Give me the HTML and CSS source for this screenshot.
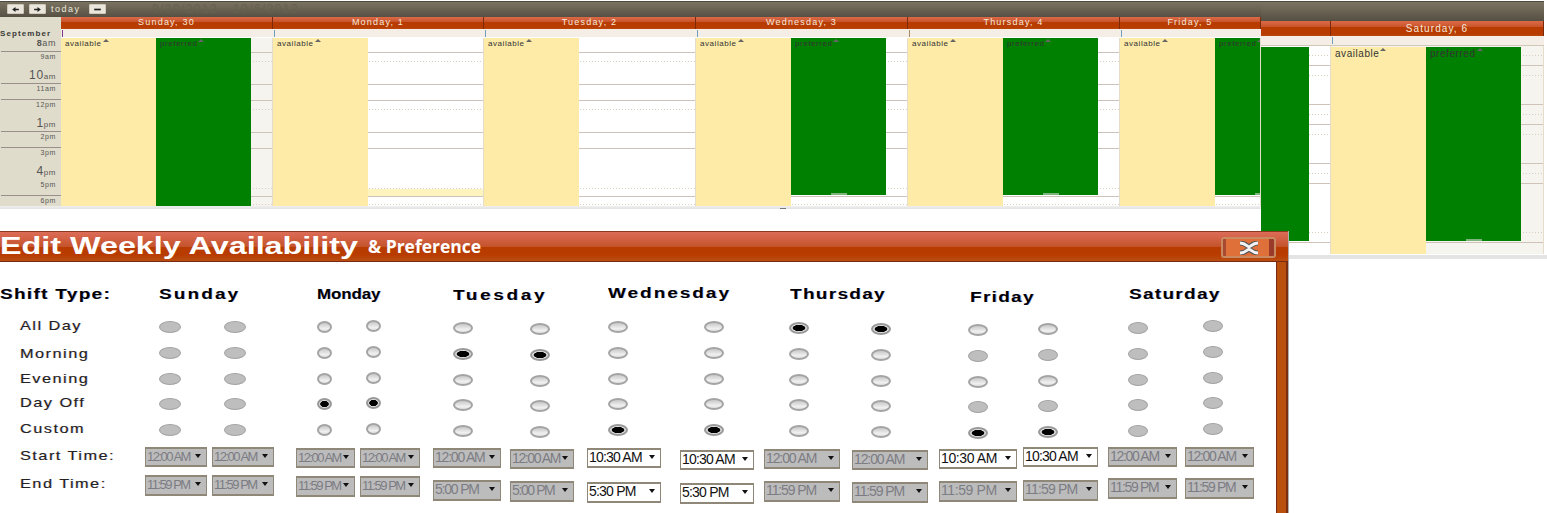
FILE: index.html
```html
<!DOCTYPE html>
<html lang="en">
<head>
<meta charset="utf-8">
<title>Edit Weekly Availability</title>
<link rel="stylesheet" href="styles.css">
</head>
<body>

<section class="win back">
  <div class="bar"></div>
  <div class="back-grid">
    <div class="head"></div><div class="head">Saturday, 6</div>
    <div class="allday"></div><div class="allday tick"></div>
    <div class="col">
      <div class="ev pref cut"></div>
    </div>
    <div class="col shade">
      <div class="ev avail"><span class="up">available</span></div>
      <div class="ev pref second"><span class="up">preferred</span><i class="handle"></i></div>
    </div>
  </div>
  <div class="strip"></div>
</section>

<section class="win front">
  <div class="bar">
    <button class="tbtn"><svg width="7" height="5" viewBox="0 0 8 6"><path d="M0 3 4 0v2h4v2H4v2z"/></svg></button>
    <button class="tbtn"><svg width="7" height="5" viewBox="0 0 8 6"><path d="M8 3 4 0v2H0v2h4v2z"/></svg></button>
    <span class="today">today</span>
    <button class="tbtn"><svg width="7" height="5" viewBox="0 0 8 6"><path d="M0 2h8v2H0z"/></svg></button>
    <span class="range">9/30/2012</span><span class="range">10/6/2012</span>
  </div>
  <div class="cal">
    <div class="corner">September</div>
    <div class="head">Sunday, 30</div><div class="head">Monday, 1</div><div class="head">Tuesday, 2</div><div class="head">Wednesday, 3</div><div class="head">Thursday, 4</div><div class="head">Friday, 5</div>
    <div class="allday tick violet"></div><div class="allday tick"></div><div class="allday tick"></div><div class="allday tick"></div><div class="allday tick brown"></div><div class="allday tick"></div>
    <div class="axis">
      <div class="hr ln"><b>8</b>am</div>
      <div class="hr">9am</div>
      <div class="hr ln big"><b>10</b>am</div>
      <div class="hr ln">11am</div>
      <div class="hr">12pm</div>
      <div class="hr ln big"><b>1</b>pm</div>
      <div class="hr ln">2pm</div>
      <div class="hr">3pm</div>
      <div class="hr big"><b>4</b>pm</div>
      <div class="hr ln">5pm</div>
      <div class="hr">6pm</div>
    </div>
    <div class="col shade">
      <div class="ev avail"><span class="up">available</span></div>
      <div class="ev pref second full"><span class="up">preferred</span></div>
    </div>
    <div class="col">
      <div class="ev avail"><span class="up">available</span></div>
      <div class="band"></div>
    </div>
    <div class="col">
      <div class="ev avail"><span class="up">available</span></div>
    </div>
    <div class="col">
      <div class="ev avail"><span class="up">available</span></div>
      <div class="ev pref second"><span class="up">preferred</span><i class="handle"></i></div>
    </div>
    <div class="col">
      <div class="ev avail"><span class="up">available</span></div>
      <div class="ev pref second"><span class="up">preferred</span><i class="handle"></i></div>
    </div>
    <div class="col">
      <div class="ev avail"><span class="up">available</span></div>
      <div class="ev pref second"><span class="up">preferred</span><i class="handle"></i></div>
    </div>
  </div>
  <div class="scroll"><i class="grip"></i></div>
</section>

<section class="dlg">
  <header class="dlg-title">
    <h1 class="t-main">Edit Weekly Availability</h1>
    <span class="t-sub">&amp; Preference</span>
    <button class="close" aria-label="Close">
      <svg width="24" height="14" viewBox="0 0 24 14"><path class="x-o" d="M3 2c5 0 7 3 9 4 2-1 4-4 9-4M3 12c5 0 7-3 9-4 2 1 4 4 9 4"/><path class="x-i" d="M3 2c5 0 7 3 9 4 2-1 4-4 9-4M3 12c5 0 7-3 9-4 2 1 4 4 9 4"/></svg>
    </button>
  </header>
  <div class="dlg-wrap">
    <div class="dlg-main">
      <div class="heads">
        <h2 class="shift">Shift Type:</h2>
        <h2>Sunday</h2><h2>Monday</h2><h2>Tuesday</h2><h2>Wednesday</h2><h2>Thursday</h2><h2>Friday</h2><h2>Saturday</h2>
      </div>
      <div class="radios">
        <div class="labels">
          <span>All Day</span><span>Morning</span><span>Evening</span><span>Day Off</span><span>Custom</span>
        </div>
        <div class="rcol wide"><input type="radio" disabled><input type="radio" disabled><input type="radio" disabled><input type="radio" disabled><input type="radio" disabled></div>
        <div class="rcol wide"><input type="radio" disabled><input type="radio" disabled><input type="radio" disabled><input type="radio" disabled><input type="radio" disabled></div>
        <div class="rcol narrow"><input type="radio"><input type="radio"><input type="radio"><input type="radio" checked><input type="radio"></div>
        <div class="rcol narrow"><input type="radio"><input type="radio"><input type="radio"><input type="radio" checked><input type="radio"></div>
        <div class="rcol"><input type="radio"><input type="radio" checked><input type="radio"><input type="radio"><input type="radio"></div>
        <div class="rcol"><input type="radio"><input type="radio" checked><input type="radio"><input type="radio"><input type="radio"></div>
        <div class="rcol"><input type="radio"><input type="radio"><input type="radio"><input type="radio"><input type="radio" checked></div>
        <div class="rcol"><input type="radio"><input type="radio"><input type="radio"><input type="radio"><input type="radio" checked></div>
        <div class="rcol"><input type="radio" checked><input type="radio"><input type="radio"><input type="radio"><input type="radio"></div>
        <div class="rcol"><input type="radio" checked><input type="radio"><input type="radio"><input type="radio"><input type="radio"></div>
        <div class="rcol"><input type="radio"><input type="radio" disabled><input type="radio"><input type="radio" disabled><input type="radio" checked></div>
        <div class="rcol"><input type="radio"><input type="radio" disabled><input type="radio"><input type="radio" disabled><input type="radio" checked></div>
        <div class="rcol"><input type="radio" disabled><input type="radio" disabled><input type="radio" disabled><input type="radio" disabled><input type="radio" disabled></div>
        <div class="rcol"><input type="radio" disabled><input type="radio" disabled><input type="radio" disabled><input type="radio" disabled><input type="radio" disabled></div>
      </div>
      <div class="sels start">
        <span class="tlabel">Start Time:</span>
        <div class="sel off">12:00 AM</div><div class="sel off">12:00 AM</div>
        <div class="sel off">12:00 AM</div><div class="sel off">12:00 AM</div>
        <div class="sel off">12:00 AM</div><div class="sel off">12:00 AM</div>
        <div class="sel">10:30 AM</div><div class="sel">10:30 AM</div>
        <div class="sel off">12:00 AM</div><div class="sel off">12:00 AM</div>
        <div class="sel">10:30 AM</div><div class="sel">10:30 AM</div>
        <div class="sel off">12:00 AM</div><div class="sel off">12:00 AM</div>
      </div>
      <div class="sels end">
        <span class="tlabel">End Time:</span>
        <div class="sel off">11:59 PM</div><div class="sel off">11:59 PM</div>
        <div class="sel off">11:59 PM</div><div class="sel off">11:59 PM</div>
        <div class="sel off">5:00 PM</div><div class="sel off">5:00 PM</div>
        <div class="sel">5:30 PM</div><div class="sel">5:30 PM</div>
        <div class="sel off">11:59 PM</div><div class="sel off">11:59 PM</div>
        <div class="sel off">11:59 PM</div><div class="sel off">11:59 PM</div>
        <div class="sel off">11:59 PM</div><div class="sel off">11:59 PM</div>
      </div>
    </div>
  </div>
</section>

</body>
</html>
```
FILE: styles.css
```css
html, body { margin: 0; height: 513px; overflow: hidden; background: #fff; }
body { position: relative; font-family: "Liberation Sans", Arial, sans-serif; color: #222; }
h1, h2 { margin: 0; }

/* ---------- calendar windows ---------- */
.win { position: absolute; top: 1px; background: #fff; }
.front { left: 0; width: 1261px; height: 230px; overflow: hidden; }
.back { left: 1261px; width: 286px; height: 260px; }

.bar {
  display: flex; align-items: center;
  height: 16px; padding-left: 7px;
  background: linear-gradient(#4f4a3f 0 1px, #7b7361 1px, #565044);
}
.back .bar { height: 20px; width: 283px; padding: 0; }

.tbtn {
  display: flex; align-items: center; justify-content: center;
  width: 17px; height: 10px; padding: 0; margin-right: 5px;
  background: #ebe6db; border: 1px solid #cfcabb; border-radius: 1px;
}
.tbtn svg { display: block; fill: #222; }
.today { width: 38px; color: #ece8dc; font-size: 9px; line-height: 10px; letter-spacing: 1.5px; }
.range { color: #66604f; font-size: 12px; letter-spacing: 1.4px; margin-left: 46px; }
.range + .range { margin-left: 15px; }
.tbtn:nth-of-type(3) { margin-right: 0; }

.cal {
  display: grid;
  grid-template-columns: 61px 212px 211px 212px 212px 212px 141px;
  grid-template-rows: 12px 9px 168px;
}
.back-grid {
  display: grid;
  width: 283px;
  grid-template-columns: 70px 213px;
  grid-template-rows: 15px 10px 208px;
}
.corner {
  grid-row: 1 / 3;
  background: #e0dccb; color: #3a3a3a;
  font: bold 8px/8px "Liberation Sans", sans-serif; letter-spacing: 1.1px;
  padding-top: 13px; white-space: nowrap; overflow: hidden;
}
.head {
  background: linear-gradient(#dc6a48, #c9552c 38%, #b83c00 42%, #b83c00 85%, #b9480e);
  border-right: 1px solid #7e2a08;
  color: #f6e8dc; text-align: center;
  font-size: 9px; line-height: 11px; letter-spacing: 1.2px;
}
.back .head { font-size: 10px; line-height: 15px; letter-spacing: 1.1px; }
.allday { background: #f5eee7; position: relative; border-bottom: 1px solid #fff; }
.back .allday { border-bottom: 1px solid #cfc8b8; }
.tick::before {
  content: ""; position: absolute; left: 1px; top: 1px;
  width: 1px; height: 7px; background: #6f9fbd;
}
.violet::before { background: #7a3a86; }
.brown::before { background: #a58a6a; }

.axis { background: #e0dccb; display: flex; flex-direction: column; padding-left: 1px; }
.hr {
  height: 16px; box-sizing: border-box;
  padding-right: 5px; text-align: right; overflow: hidden;
  font-size: 7px; line-height: 9px; color: #555; letter-spacing: .6px;
  white-space: nowrap;
}
.hr:first-child { height: 14px; font-size: 9px; line-height: 6px; }
.hr:last-child { height: 10px; }
.hr.ln { border-bottom: 1px solid #9a8f8c; }
.hr.big { padding-top: 2px; font-size: 8px; }
.hr b { font-weight: normal; font-size: 12px; line-height: 10px; }
.hr:first-child b { font-size: 9px; font-weight: bold; }

.col {
  --solid: linear-gradient(#cfc2b8, #cfc2b8);
  --dot: repeating-linear-gradient(90deg, #d9d0c0 0 1px, transparent 1px 3px);
  position: relative;
  border-right: 1px solid #e6dccb;
  overflow: hidden;
  background-repeat: no-repeat;
  background-size: 100% 1px;
  background-color: #fff;
}
.cal .col {
  background-image: var(--solid), var(--dot), var(--solid), var(--solid), var(--dot), var(--solid), var(--solid), var(--dot), var(--solid), var(--dot);
  background-position: 0 14px, 0 23px, 0 46px, 0 62px, 0 71px, 0 94px, 0 110px, 0 150px, 0 158px, 0 166px;
}
.back-grid .col {
  background-image: var(--dot), var(--solid), var(--dot), var(--solid), var(--solid), var(--dot), var(--solid), var(--solid), var(--dot), var(--dot), var(--solid), var(--dot);
  background-position: 0 9px, 0 19px, 0 29px, 0 58px, 0 78px, 0 68px, 0 117px, 0 137px, 0 88px, 0 127px, 0 196px, 0 186px;
}
.col.shade { background-color: #f5f4ef; }

.ev {
  position: absolute; top: 0; left: 0;
  width: 95px; height: 100%; box-sizing: border-box;
  padding: 2px 0 0 4px;
  font-size: 8px; line-height: 7px; letter-spacing: .55px; color: #333;
  overflow: hidden;
}
.avail { background: #feeba8; }
.pref { background: #008000; height: 157px; }
.second { left: 95px; }
.full { height: 100%; }
.cut { width: 48px; height: 194px; top: 1px; }
.back-grid .avail { top: 1px; height: 207px; font-size: 10px; line-height: 10px; }
.back-grid .second { top: 1px; height: 194px; font-size: 10px; line-height: 10px; }
.up::after {
  content: ""; display: inline-block; vertical-align: top;
  margin: -1px 0 0 1px;
  border: 3px solid transparent; border-top: 0; border-bottom-color: #666;
}
.handle {
  position: absolute; bottom: 0; left: 40px;
  width: 16px; height: 2px; background: #7fb47f;
}
.band { position: absolute; left: 95px; right: 0; top: 151px; height: 7px; background: #fdf4c0; }

.scroll { height: 3px; background: linear-gradient(#efefef, #e2e2e2); position: relative; }
.grip { position: absolute; left: 780px; top: 2px; width: 6px; height: 1px; background: #777; }
.strip { height: 4px; margin-top: 1px; background: #e4e4e4; }

/* ---------- dialog ---------- */
.dlg { position: absolute; left: 0; top: 231px; width: 1288px; box-shadow: 1px 0 0 #b0b0b0; }
.dlg-title {
  position: relative; display: flex; align-items: flex-start;
  height: 30px; border-bottom: 1px solid #7a2a10; overflow: hidden;
  background: linear-gradient(#8a3a20 0 1px, #dd6c58 1px, #c4532c 52%, #b83c00 55%, #b83c00 80%, #b94e12);
}
.t-main {
  flex: none; color: #fff; font-size: 23px; line-height: 31px; font-weight: bold;
  width: 262px; white-space: nowrap;
  transform: scaleX(1.405); transform-origin: left center;
}
.t-sub {
  margin-left: 106px; color: #fff; font-family: "Open Sans", sans-serif;
  font-size: 17.5px; line-height: 30px; font-weight: 700; white-space: nowrap;
}
.close {
  position: absolute; left: 1221px; top: 6px;
  display: flex; align-items: center; justify-content: center;
  width: 55px; height: 21px; padding: 0;
  background: linear-gradient(90deg, #a84a30 0 3px, #e0703a 3px 90%, #9a3a28 90%);
  border: 2px solid #c98a62; border-radius: 3px;
}
.close svg { display: block; fill: none; }
.x-o { stroke: #555; stroke-width: 5; }
.x-i { stroke: #f2f2f2; stroke-width: 3; }

.dlg-wrap { background: #b9500e; padding-right: 9px; border-right: 2px solid #7a3010; }
.dlg-main { border-right: 1px solid #7a2a10; background: #fff; width: 1276px; height: 260px; }

.heads { display: flex; align-items: flex-start; height: 58px; box-sizing: border-box; padding-top: 23px; color: #000; }
.heads h2 {
  flex: none; margin-top: 1px; font-size: 14px; line-height: 16px; font-weight: bold; white-space: nowrap;
  text-shadow: .6px 0 rgba(0, 0, 170, .35);
  transform: scaleX(1.35); transform-origin: left center;
}
.heads h2:nth-child(1) { width: 159px; letter-spacing: 1px; }
.heads h2:nth-child(2) { width: 158px; letter-spacing: 1.6px; }
.heads h2:nth-child(3) { width: 136px; transform: scaleX(1.2); }
.heads h2:nth-child(4) { width: 155px; margin-top: 2px; letter-spacing: 2px; }
.heads h2:nth-child(5) { width: 182px; margin-top: 0; letter-spacing: 1.5px; }
.heads h2:nth-child(6) { width: 180px; letter-spacing: 1px; }
.heads h2:nth-child(7) { width: 159px; margin-top: 4px; letter-spacing: 1px; }
.heads h2:nth-child(8) { letter-spacing: 1px; }

.radios { display: flex; height: 127px; }
.labels { flex: none; width: 159px; box-sizing: border-box; padding-left: 20px; }
.labels span, .tlabel {
  display: block; font-size: 13px; line-height: 12px; letter-spacing: 1.2px; color: #222;
  text-shadow: -.6px 0 rgba(220, 150, 40, .3), .6px 0 rgba(40, 60, 200, .3);
  transform: scaleX(1.25); transform-origin: left center;
}
.labels span { transform-origin: 0 50%; white-space: nowrap; }
.labels span:nth-child(1) { height: 28px; }
.labels span:nth-child(2) { height: 25px; }
.labels span:nth-child(3) { height: 24px; }
.labels span:nth-child(4) { height: 26px; }

.rcol { flex: none; display: flex; flex-direction: column; width: 20px; }
.rcol.wide { width: 22px; }
.rcol.narrow { width: 15px; }
.rcol input {
  appearance: none; -webkit-appearance: none;
  flex: none;
  display: block; width: 100%; height: 12px; margin: 0 0 14px; padding: 0;
  box-sizing: border-box; border-radius: 50%;
  border: 2px solid #a4a4a4;
  background: linear-gradient(#c8c8c8, #f0f0f0 70%, #dedede);
}
.rcol input:nth-child(3) { margin-bottom: 13px; }
.rcol input:last-child { margin-bottom: 0; }
.rcol input:disabled { background: #bebebe; border: 1px solid #a2a2a2; }
.rcol input:checked {
  background: radial-gradient(ellipse 42% 42% at 50% 50%, #000 0 85%, #dcdcdc 100%);
  border: 2px solid #999;
}
.rcol:nth-child(2) { margin: 1px 0 0 0; }
.rcol:nth-child(3) { margin: 1px 0 0 43px; }
.rcol:nth-child(4) { margin: 1px 0 0 71px; }
.rcol:nth-child(5) { margin: 0 0 0 34px; }
.rcol:nth-child(6) { margin: 2px 0 0 72px; }
.rcol:nth-child(7) { margin: 3px 0 0 57px; }
.rcol:nth-child(8) { margin: 1px 0 0 58px; }
.rcol:nth-child(9) { margin: 1px 0 0 76px; }
.rcol:nth-child(10) { margin: 2px 0 0 65px; }
.rcol:nth-child(11) { margin: 3px 0 0 62px; }
.rcol:nth-child(12) { margin: 4px 0 0 77px; }
.rcol:nth-child(13) { margin: 3px 0 0 50px; }
.rcol:nth-child(14) { margin: 2px 0 0 70px; }
.rcol:nth-child(15) { margin: 0 0 0 55px; }

.sels { display: flex; align-items: flex-start; }
.start { height: 28px; }
.end { height: 38px; }
.tlabel { width: 145px; box-sizing: border-box; padding-left: 16px; flex: none; white-space: nowrap; }
.start .tlabel { margin-top: 3px; }
.end .tlabel { margin-top: 3px; }

.sel {
  position: relative; flex: none;
  box-sizing: border-box; padding-left: 1px;
  background: #fff; color: #111;
  border: 1px solid #8f8878; border-width: 2px 1px;
  font-size: 14px; line-height: 15px; white-space: nowrap;
  overflow: hidden; height: 20px;
  letter-spacing: -.8px;
}
.sel::after {
  content: ""; position: absolute; right: 5px; top: 5px;
  border: 3.5px solid transparent; border-top: 4px solid #111; border-bottom: 0;
}
.sel.off { background: #bcbcbc; color: #7c7c84; }

.sel:nth-child(2)  { width: 62px; font-size: 13px; letter-spacing: -1.5px; }
.sel:nth-child(3)  { width: 62px; margin-left: 5px; font-size: 13px; letter-spacing: -1.5px; }
.sel:nth-child(4)  { width: 59px; margin-left: 22px; font-size: 13px; letter-spacing: -1.5px; }
.sel:nth-child(5)  { width: 60px; margin-left: 5px; font-size: 13px; letter-spacing: -1.5px; }
.sel:nth-child(6)  { width: 68px; margin-left: 13px; letter-spacing: -1.2px; }
.sel:nth-child(7)  { width: 64px; margin-left: 9px; letter-spacing: -1.4px; }
.sel:nth-child(8)  { width: 74px; margin-left: 13px; }
.sel:nth-child(9)  { width: 74px; margin-left: 19px; }
.sel:nth-child(10) { width: 76px; margin-left: 10px; letter-spacing: -1.1px; }
.sel:nth-child(11) { width: 76px; margin-left: 12px; letter-spacing: -1.1px; }
.sel:nth-child(12) { width: 78px; margin-left: 11px; letter-spacing: -.4px; }
.sel:nth-child(13) { width: 75px; margin-left: 6px; letter-spacing: -.8px; }
.sel:nth-child(14) { width: 69px; margin-left: 10px; letter-spacing: -1.3px; }
.sel:nth-child(15) { width: 69px; margin-left: 8px; letter-spacing: -1.3px; }

.start .sel:nth-child(4), .start .sel:nth-child(5), .start .sel:nth-child(6), .start .sel:nth-child(8) { margin-top: 1px; }
.start .sel:nth-child(7), .start .sel:nth-child(10), .start .sel:nth-child(12) { margin-top: 2px; }
.start .sel:nth-child(9), .start .sel:nth-child(11) { margin-top: 3px; }

.end .sel { height: 21px; }
.end .sel:nth-child(4), .end .sel:nth-child(5) { margin-top: 1px; }
.end .sel:nth-child(6), .end .sel:nth-child(13) { margin-top: 5px; }
.end .sel:nth-child(7), .end .sel:nth-child(10), .end .sel:nth-child(12) { margin-top: 6px; }
.end .sel:nth-child(8), .end .sel:nth-child(11) { margin-top: 7px; }
.end .sel:nth-child(9) { margin-top: 8px; }
.end .sel:nth-child(14), .end .sel:nth-child(15) { margin-top: 3px; }
```
